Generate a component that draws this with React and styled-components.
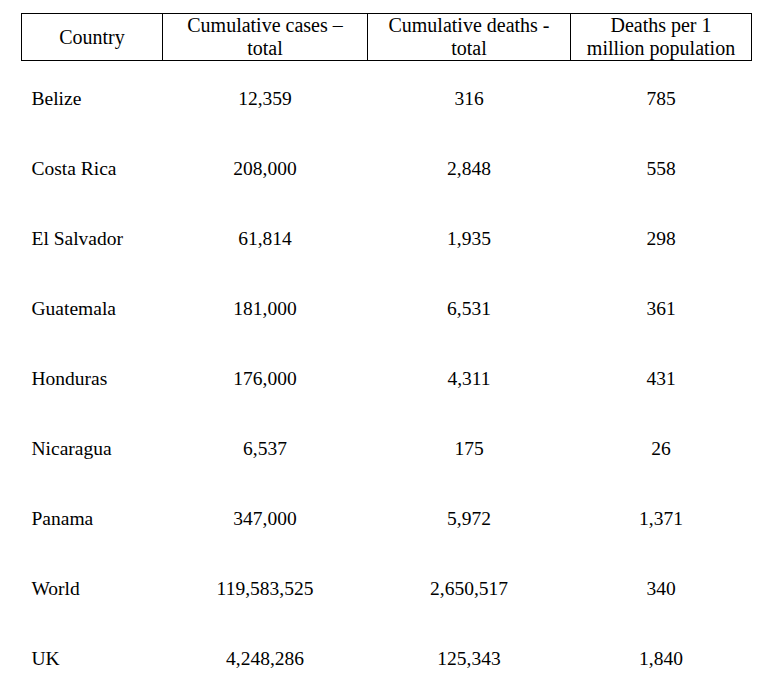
import React from "react";
import styled, { createGlobalStyle } from "styled-components";

const SERIF = `"Liberation Serif", Tinos, "Times New Roman", Times, serif`;

const GlobalStyle = createGlobalStyle`
    body {
        margin: 0;
        background: #fff;
        font-family: ${SERIF};
        color: #000;
    }
`;

const ROWS = [
    ["Belize", "12,359", "316", "785"],
    ["Costa Rica", "208,000", "2,848", "558"],
    ["El Salvador", "61,814", "1,935", "298"],
    ["Guatemala", "181,000", "6,531", "361"],
    ["Honduras", "176,000", "4,311", "431"],
    ["Nicaragua", "6,537", "175", "26"],
    ["Panama", "347,000", "5,972", "1,371"],
    ["World", "119,583,525", "2,650,517", "340"],
    ["UK", "4,248,286", "125,343", "1,840"]
];

const HEADERS = [
    ["Country"],
    ["Cumulative cases –", "total"],
    ["Cumulative deaths -", "total"],
    ["Deaths per 1", "million population"]
];

const COL_WIDTHS = [141, 205, 203, 181];

const Page = styled.div`
    padding: 13px 0 0 21px;
`;
const Table = styled.table`
    border-collapse: collapse;
    table-layout: fixed;
    width: 730px;
    font-family: ${SERIF};
    color: #000;
`;
const HeadCell = styled.th`
    border: 1px solid #000;
    font-family: ${SERIF};
    font-weight: normal;
    font-size: 20px;
    line-height: 23px;
    height: 46px;
    padding: 0 2px;
    text-align: center;
    vertical-align: middle;
`;
const Cell = styled.td`
    font-family: ${SERIF};
    font-size: 19.5px;
    height: 70px;
    padding: ${props => (props.$first ? "6px 0 0 10px" : "6px 0 0 0")};
    box-sizing: border-box;
    text-align: ${props => (props.$first ? "left" : "center")};
    vertical-align: middle;
`;

export default function App() {
    return (
        <Page>
            <GlobalStyle />
            <Table>
                <colgroup>
                    {COL_WIDTHS.map((w, i) => (
                        <col key={i} style={{ width: w }} />
                    ))}
                </colgroup>
                <thead>
                    <tr>
                        {HEADERS.map((lines, i) => (
                            <HeadCell key={i}>
                                {lines.map((line, j) => (
                                    <div key={j}>{line}</div>
                                ))}
                            </HeadCell>
                        ))}
                    </tr>
                </thead>
                <tbody>
                    {ROWS.map(row => (
                        <tr key={row[0]}>
                            {row.map((value, i) => (
                                <Cell key={i} $first={i === 0}>
                                    {value}
                                </Cell>
                            ))}
                        </tr>
                    ))}
                </tbody>
            </Table>
        </Page>
    );
}
